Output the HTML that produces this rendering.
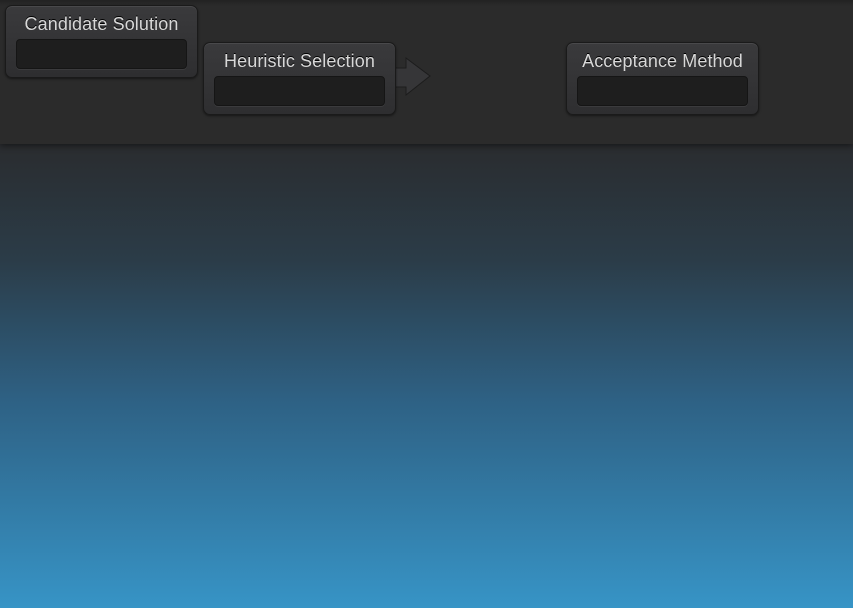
<!DOCTYPE html>
<html><head><style>
html,body{margin:0;padding:0}
body{width:853px;height:608px;position:relative;overflow:hidden;font-family:"Liberation Sans",sans-serif;
background:linear-gradient(180deg,#2a2c2f 144px,#2b3c48 260px,#2e6184 400px,#3794c6 608px);}
.hdr{position:absolute;left:0;top:0;width:853px;height:144px;background:#2b2b2b;box-shadow:0 2px 6px rgba(0,0,0,.45);}
.hdr:before{content:"";position:absolute;left:0;top:0;right:0;height:6px;background:linear-gradient(#222,#2b2b2b)}
.box{position:absolute;width:191px;height:71px;border:1px solid #1a1a1a;border-radius:7px;background:linear-gradient(#3a3a3c,#2e2e30);box-shadow:0 1px 2px rgba(0,0,0,.5),inset 0 1px 0 rgba(255,255,255,.08);}
.box .t{position:absolute;left:-5px;right:-5px;top:8px;text-align:center;color:#d8d8d8;font-size:18px;letter-spacing:0.1px;text-shadow:0 -1px 0 #000}
.box .i{position:absolute;left:10px;top:33px;width:169px;height:28px;border:1px solid #151515;border-radius:4px;background:#1e1e1e;box-shadow:0 1px 0 rgba(255,255,255,.06)}
</style></head><body>
<div class="hdr"></div>
<svg style="position:absolute;left:390px;top:55px" width="45" height="45">
<path d="M0 13 H16 V3 L40 21 L16 40 V32 H0 Z" fill="#363638" stroke="#1c1c1c" stroke-width="1"/>
</svg>
<div class="box" style="left:5px;top:5px"><div class="t">Candidate Solution</div><div class="i"></div></div>
<div class="box" style="left:203px;top:42px"><div class="t">Heuristic Selection</div><div class="i"></div></div>
<div class="box" style="left:566px;top:42px"><div class="t">Acceptance Method</div><div class="i"></div></div>
</body></html>
